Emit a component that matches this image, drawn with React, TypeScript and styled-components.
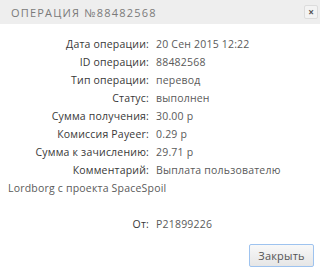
import React from "react";
import styled, { createGlobalStyle } from "styled-components";

const Global = createGlobalStyle`
  html, body { margin: 0; padding: 0; background: #fff; }
  body { font-family: "Open Sans", "Liberation Sans", sans-serif; }
`;

const Dialog = styled.div`
  width: 320px;
  height: 274px;
  background: #fff;
  display: flex;
  flex-direction: column;
  overflow: hidden;
`;

const Header = styled.div`
  height: 24px;
  background: #eeeeee;
  display: flex;
  align-items: center;
  justify-content: space-between;
  padding: 0 2px 0 11px;
  box-sizing: border-box;
`;

const Title = styled.div`
  font-size: 11px;
  letter-spacing: 1.2px;
  color: #7a7a7a;
`;

const CloseX = styled.div`
  width: 14px;
  height: 14px;
  box-sizing: border-box;
  border: 1px solid #dcdcdc;
  border-radius: 2px;
  background: #f3f3f3;
  display: flex;
  align-items: center;
  justify-content: center;
  color: #555;
  font-size: 10px;
  font-weight: bold;
  line-height: 1;
`;

const Body = styled.div`
  padding: 11px 8px 0 8px;
  font-size: 10.5px;
  letter-spacing: 0.2px;
  line-height: 18px;
  color: #5a5a5a;
  flex: 1;
`;

const Row = styled.div<{ $gapBefore?: boolean }>`
  display: flex;
  margin-top: ${(p) => (p.$gapBefore ? "18px" : "0")};
`;

const Label = styled.span`
  width: 141px;
  flex: none;
  text-align: right;
  color: #383838;
  margin-right: 7px;
`;

const Value = styled.span`
  white-space: nowrap;
`;

const Footer = styled.div`
  display: flex;
  justify-content: flex-end;
  padding: 0 6px 7px 0;
`;

const Button = styled.button`
  width: 65px;
  height: 23px;
  border: 1px solid #9ec3ef;
  border-radius: 2px;
  background: linear-gradient(#f8f8f8, #e6e6e6);
  color: #555;
  font-family: "Open Sans", "Liberation Sans", sans-serif;
  font-size: 11px;
  letter-spacing: 0.2px;
  padding: 0;
`;

const rows: [string, string][] = [
  ["Дата операции:", "20 Сен 2015 12:22"],
  ["ID операции:", "88482568"],
  ["Тип операции:", "перевод"],
  ["Статус:", "выполнен"],
  ["Сумма получения:", "30.00 р"],
  ["Комиссия Payeer:", "0.29 р"],
  ["Сумма к зачислению:", "29.71 р"],
  ["Комментарий:", "Выплата пользователю"],
];

export default function App() {
  return (
    <>
      <Global />
      <Dialog>
        <Header>
          <Title>ОПЕРАЦИЯ №88482568</Title>
          <CloseX>×</CloseX>
        </Header>
        <Body>
          {rows.map(([l, v]) => (
            <Row key={l}>
              <Label>{l}</Label>
              <Value>{v}</Value>
            </Row>
          ))}
          <Row>
            <Value>Lordborg с проекта SpaceSpoil</Value>
          </Row>
          <Row $gapBefore>
            <Label>От:</Label>
            <Value>P21899226</Value>
          </Row>
        </Body>
        <Footer>
          <Button>Закрыть</Button>
        </Footer>
      </Dialog>
    </>
  );
}
